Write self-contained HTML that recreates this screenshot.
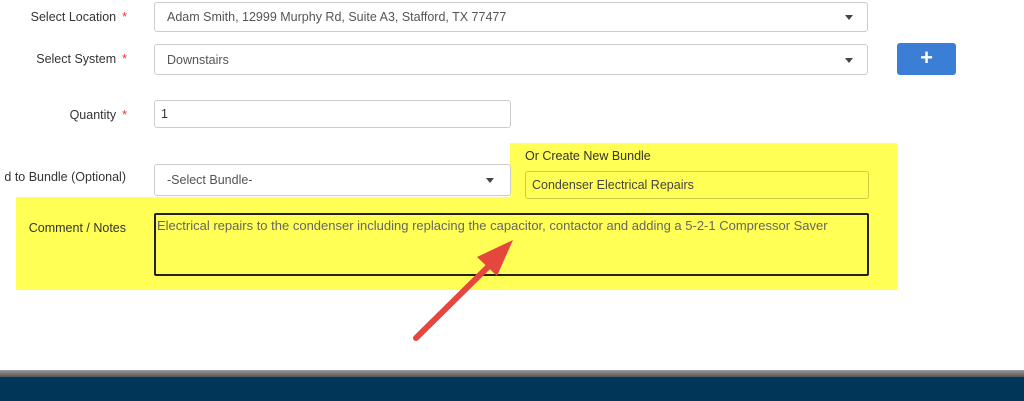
<!DOCTYPE html>
<html><head><style>
body{margin:0;width:1024px;height:401px;background:#fff;position:relative;overflow:hidden;font-family:"Liberation Sans",sans-serif;font-size:12.5px;color:#333}
.a{position:absolute}
.lbl{position:absolute;text-align:right;width:300px;color:#333}
.lbl b{color:#e33;font-weight:normal;margin-left:6px}
.in{position:absolute;border:1px solid #ccc;border-radius:3px;background:#fff;box-sizing:border-box;color:#555;padding-left:12px;display:flex;align-items:center}
.car{position:absolute;right:14px;top:50%;margin-top:-2px;border-left:4px solid transparent;border-right:4px solid transparent;border-top:5px solid #444}
</style></head><body>
<div class="a" style="left:510px;top:143px;width:387px;height:70px;background:#ffff55"></div>
<div class="a" style="left:16px;top:197px;width:881px;height:93px;background:#ffff55"></div>

<div class="lbl" style="left:-173px;top:10px">Select Location<b>*</b></div>
<div class="in" style="left:154px;top:2px;width:714px;height:30px">Adam Smith, 12999 Murphy Rd, Suite A3, Stafford, TX 77477<span class="car"></span></div>

<div class="lbl" style="left:-173px;top:52px">Select System<b>*</b></div>
<div class="in" style="left:154px;top:44px;width:714px;height:31px">Downstairs<span class="car"></span></div>
<div class="a" style="left:897px;top:43px;width:59px;height:32px;background:#3a7fd5;border-radius:3px;color:#fff;font-size:22px;font-weight:bold;text-align:center;line-height:30px">+</div>

<div class="lbl" style="left:-173px;top:108px">Quantity<b>*</b></div>
<div class="in" style="left:154px;top:100px;width:357px;height:28px;padding-left:6px;color:#333">1</div>

<div class="lbl" style="left:-174px;top:170px">d to Bundle (Optional)</div>
<div class="in" style="left:154px;top:164px;width:357px;height:32px">-Select Bundle-<span class="car" style="right:16px"></span></div>

<div class="a" style="left:525px;top:149px;color:#333">Or Create New Bundle</div>
<div class="in" style="left:525px;top:171px;width:344px;height:28px;background:#ffff55;border-color:#cccc44;padding-left:6px;color:#444">Condenser Electrical Repairs</div>

<div class="lbl" style="left:-174px;top:221px">Comment / Notes</div>
<div class="a" style="left:154px;top:213px;width:715px;height:63px;border:2px solid #222;border-radius:2px;box-sizing:border-box;padding:3px 1px;color:#666;font-size:13px;white-space:nowrap">Electrical repairs to the condenser including replacing the capacitor, contactor and adding a 5-2-1 Compressor Saver</div>

<svg class="a" style="left:0;top:0" width="1024" height="401">
<line x1="416" y1="338" x2="493" y2="262" stroke="#e5473f" stroke-width="6" stroke-linecap="round"/>
<polygon points="513,240 477,257 497,276" fill="#e5473f"/>
</svg>

<div class="a" style="left:0;top:370px;width:1024px;height:7px;background:linear-gradient(#999,#555)"></div>
<div class="a" style="left:0;top:377px;width:1024px;height:24px;background:#023658"></div>
</body></html>
